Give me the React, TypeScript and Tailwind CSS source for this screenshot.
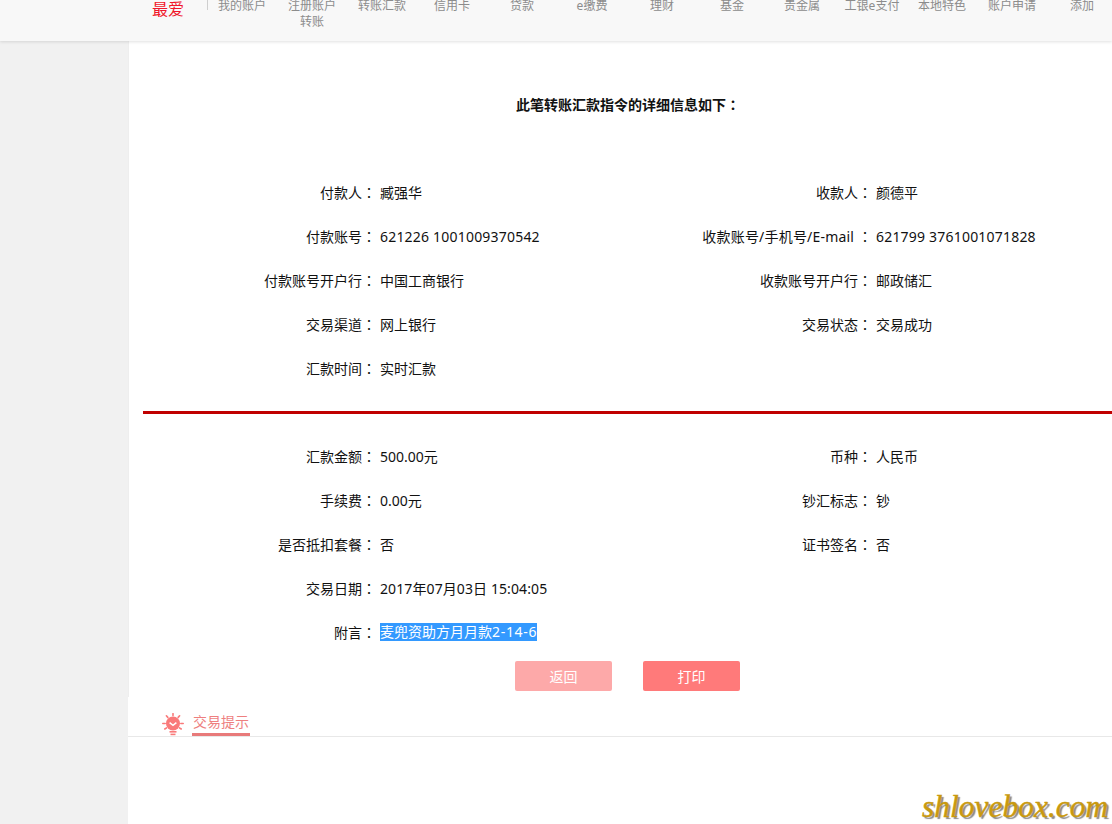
import type { ReactNode } from "react";

const nav = [
  ["我的账户"],
  ["注册账户", "转账"],
  ["转账汇款"],
  ["信用卡"],
  ["贷款"],
  ["e缴费"],
  ["理财"],
  ["基金"],
  ["贵金属"],
  ["工银e支付"],
  ["本地特色"],
  ["账户申请"],
  ["添加"],
];

type Cell = [ReactNode, ReactNode];

function Colon() {
  return <span className="font-['Noto_Sans_CJK_TC',sans-serif]">：</span>;
}

function Num({ children }: { children: ReactNode }) {
  return <span className="tracking-[0.2px]">{children}</span>;
}

function Field({ cell }: { cell?: Cell }) {
  if (!cell) return <div />;
  return (
    <div className="flex h-11 items-center">
      <div className="w-[247px] shrink-0 whitespace-pre text-right">
        {cell[0]}
        <Colon />
      </div>
      <div className="ml-1 whitespace-nowrap">{cell[1]}</div>
    </div>
  );
}

function Rows({ rows }: { rows: [Cell, Cell?][] }) {
  return (
    <div className="flex flex-col">
      {rows.map((r, i) => (
        <div key={i} className="grid grid-cols-[496px_1fr]">
          <Field cell={r[0]} />
          <Field cell={r[1]} />
        </div>
      ))}
    </div>
  );
}

export default function App() {
  return (
    <div className="relative h-[824px] w-[1112px] overflow-hidden bg-white text-[14px] text-[#111] font-['Noto_Sans','Noto_Sans_CJK_SC',sans-serif]">
      <header className="relative z-10 flex h-[41px] bg-[#f8f8f8] shadow-[0_1px_3px_rgba(0,0,0,0.12)]">
        <div className="w-[207px] shrink-0 pl-[152px] text-[16px] leading-[18px] text-[#f0162a]">最爱</div>
        <div className="relative flex">
          <div className="absolute left-0 top-0 h-[10px] w-px bg-[#cfcfcf]" />
          {nav.map((n) => (
            <div key={n[0]} className="-mt-[2px] w-[70px] shrink-0 text-center text-[12px] leading-[16px] text-[#8c8c8c]">
              {n.map((t) => (
                <div key={t}>{t}</div>
              ))}
            </div>
          ))}
        </div>
      </header>
      <div className="flex h-[783px]">
        <aside className="w-[128px] shrink-0 bg-[#f1f1f1]" />
        <main className="flex min-w-0 flex-1 flex-col">
          <section className="h-[656px] border-l border-[#eeeeee]">
            <h1 className="mt-[53px] h-5 pl-[387px] text-[14px] font-bold leading-5 whitespace-nowrap">
              此笔转账汇款指令的详细信息如下
              <Colon />
            </h1>
            <div className="mt-[56px]">
              <Rows
                rows={[
                  [["付款人", "臧强华"], ["收款人", "颜德平"]],
                  [
                    ["付款账号", <Num>621226 1001009370542</Num>],
                    [<span className="tracking-[0.2px]">收款账号/手机号/E-mail </span>, <Num>621799 3761001071828</Num>],
                  ],
                  [["付款账号开户行", "中国工商银行"], ["收款账号开户行", "邮政储汇"]],
                  [["交易渠道", "网上银行"], ["交易状态", "交易成功"]],
                  [["汇款时间", "实时汇款"]],
                ]}
              />
            </div>
            <div className="ml-[14px] mt-[21px] h-[3px] bg-[#c00000]" />
            <div className="mt-5">
              <Rows
                rows={[
                  [["汇款金额", "500.00元"], ["币种", "人民币"]],
                  [["手续费", "0.00元"], ["钞汇标志", "钞"]],
                  [["是否抵扣套餐", "否"], ["证书签名", "否"]],
                  [["交易日期", <span className="tracking-[0.1px]">2017年07月03日 15:04:05</span>]],
                ]}
              />
              <div className="flex h-11 items-center">
                <div className="w-[247px] shrink-0 text-right">
                  附言
                  <Colon />
                </div>
                <div className="ml-1 whitespace-nowrap bg-[#3399ff] leading-[18px] text-white">
                  麦兜资助方月月款<span className="tracking-[0.7px]">2-14-6</span>
                </div>
              </div>
            </div>
            <div className="mt-[7px] flex h-[30px] gap-[31px] pl-[386px] text-[14px] text-white">
              <button className="h-[30px] w-[97px] rounded-[2px] bg-[#fda9a9]">返回</button>
              <button className="h-[30px] w-[97px] rounded-[2px] bg-[#ff7a7a]">打印</button>
            </div>
          </section>
          <div className="flex h-[40px] items-end border-b border-[#e8e8e8] pl-[34px]">
            <svg width="22" height="23" viewBox="0 0 22 23" fill="none">
              <g stroke="#f97a7a" strokeWidth="1.6" strokeLinecap="round">
                <path d="M11 0.6v2M4.4 2.8l1.4 1.6M17.6 2.8l-1.4 1.6M0.8 10.5h2.4M18.8 10.5h2.4M2.8 16l1.8-1.2M19.2 16l-1.8-1.2" />
              </g>
              <circle cx="11" cy="10.5" r="7" fill="#f97a7a" />
              <path d="M7.6 9.6l3.4 2.8 3.4-2.8" stroke="#fff" strokeWidth="1.5" />
              <rect x="7.5" y="18" width="7" height="1.6" fill="#f97a7a" />
              <rect x="8.5" y="20.6" width="5" height="1.6" fill="#f97a7a" />
            </svg>
            <div className="ml-[8px] h-[23px] w-[58px] border-b-[3px] border-[#e87a7a] pl-px text-[14px] leading-[18px] text-[#ee7f7f]">交易提示</div>
          </div>
        </main>
      </div>
      <div className="absolute left-[922px] top-[787px] whitespace-nowrap font-['Liberation_Serif',serif] text-[31.5px] italic leading-[40px] text-[#c9990f] [-webkit-text-stroke:0.5px_#c9990f] [text-shadow:2px_2px_1px_#8a8a8a]">shlovebox.com</div>
    </div>
  );
}
